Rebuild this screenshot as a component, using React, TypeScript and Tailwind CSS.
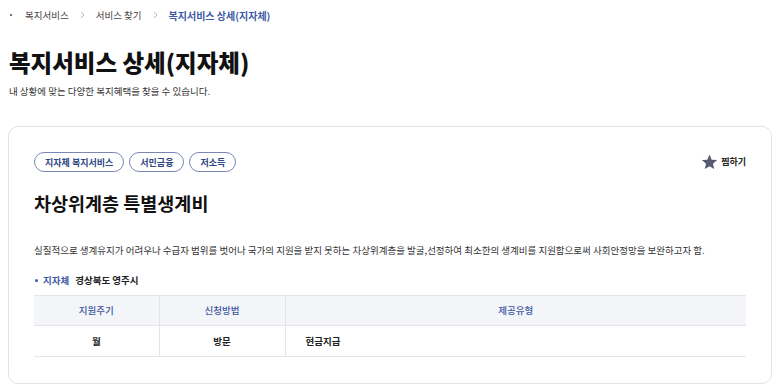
import React from "react";

const FONT = { fontFamily: '"Noto Sans CJK KR", "Noto Sans", sans-serif' };

function Chevron() {
  return (
    <svg width="5" height="8" viewBox="0 0 5 8" className="mx-[11px]">
      <path d="M1 1 L4 4 L1 7" fill="none" stroke="#b5b5b5" strokeWidth="1" />
    </svg>
  );
}

function Tag({ children }: { children: React.ReactNode }) {
  return (
    <span className="inline-flex items-center h-[20px] px-[10px] rounded-full border border-[#7b87b3] text-[9px] font-semibold text-[#2f4783] leading-none">
      {children}
    </span>
  );
}

export default function App() {
  return (
    <div style={FONT} className="w-[780px] h-[391px] bg-white px-[8px] overflow-hidden">
      <div className="h-[30px] flex items-center pl-[2px]">
        <span className="w-[2px] h-[2px] rounded-full bg-[#444]" />
        <span className="ml-[13px] text-[9.5px] text-[#444]">복지서비스</span>
        <Chevron />
        <span className="text-[9.5px] text-[#444]">서비스 찾기</span>
        <Chevron />
        <span className="text-[10px] font-semibold text-[#3d5aa6]">복지서비스 상세(지자체)</span>
      </div>
      <h1 className="mt-[16px] text-[23.5px] leading-[32px] font-extrabold text-[#111] pl-[1px]">
        복지서비스 상세(지자체)
      </h1>
      <p className="mt-[6px] text-[9.5px] leading-[14px] text-[#333] pl-[1px]">
        내 상황에 맞는 다양한 복지혜택을 찾을 수 있습니다.
      </p>
      <div className="mt-[28px] border border-[#e4e4e4] rounded-[10px] pt-[25px] pb-[26px] px-[25px]">
        <div className="flex items-center justify-between">
          <div className="flex gap-[5px]">
            <Tag>지자체 복지서비스</Tag>
            <Tag>서민금융</Tag>
            <Tag>저소득</Tag>
          </div>
          <div className="flex items-center gap-[3px]">
            <svg width="17" height="16" viewBox="0 0 24 23">
              <path
                d="M12 0.8 L15.1 8.1 L23 8.7 L17 13.9 L18.8 21.6 L12 17.5 L5.2 21.6 L7 13.9 L1 8.7 L8.9 8.1 Z"
                fill="#575a72"
              />
            </svg>
            <span className="text-[9px] font-semibold text-[#222]">찜하기</span>
          </div>
        </div>
        <h2 className="mt-[19px] text-[18.5px] leading-[24px] font-bold text-[#111]">
          차상위계층 특별생계비
        </h2>
        <p className="mt-[27px] text-[9.5px] leading-[16px] text-[#333]">
          실질적으로 생계유지가 어려우나 수급자 범위를 벗어나 국가의 지원을 받지 못하는 차상위계층을 발굴,선정하여 최소한의 생계비를 지원함으로써 사회안정망을 보완하고자 함.
        </p>
        <div className="mt-[15px] flex items-center h-[14px]">
          <span className="w-[3px] h-[3px] rounded-full bg-[#3d5aa6] ml-[1px]" />
          <span className="ml-[5px] text-[9.5px] font-bold text-[#3d5aa6]">지자체</span>
          <span className="ml-[6px] text-[9.5px] font-bold text-[#222]">경상북도 영주시</span>
        </div>
        <table className="mt-[8px] w-full border-collapse text-[9.5px]">
          <thead>
            <tr className="bg-[#f3f5f9] h-[30px] border-t border-[#e3e5ea] border-b">
              <th className="w-[125px] font-medium text-[#3d55a0] border-r border-[#e3e5ea]">지원주기</th>
              <th className="w-[126px] font-medium text-[#3d55a0] border-r border-[#e3e5ea]">신청방법</th>
              <th className="font-medium text-[#3d55a0]">제공유형</th>
            </tr>
          </thead>
          <tbody>
            <tr className="h-[31px] border-b border-[#e3e5ea]">
              <td className="text-center font-semibold text-[#222] border-r border-[#e3e5ea]">월</td>
              <td className="text-center font-semibold text-[#222] border-r border-[#e3e5ea]">방문</td>
              <td className="pl-[20px] font-semibold text-[#222]">현금지급</td>
            </tr>
          </tbody>
        </table>
      </div>
    </div>
  );
}
